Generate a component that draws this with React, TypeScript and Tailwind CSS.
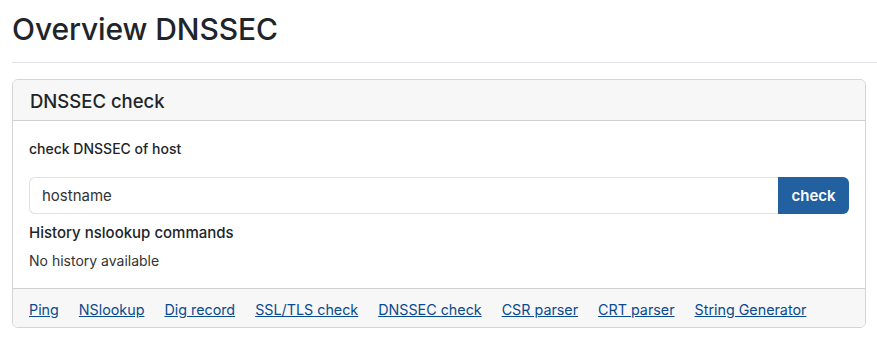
import React from "react";

const links = [
  "Ping",
  "NSlookup",
  "Dig record",
  "SSL/TLS check",
  "DNSSEC check",
  "CSR parser",
  "CRT parser",
  "String Generator",
];

const App = () => {
  return (
    <div className="min-h-[338px] bg-white pl-3 pr-[11px] text-[#212529] font-['Inter',sans-serif]">
      <h1 className="pt-[11px] text-[30px] leading-[36px] font-medium tracking-[-0.1px]">
        Overview DNSSEC
      </h1>
      <hr className="mt-[15px] -mr-[11px] border-t border-[#dee2e6]" />

      <div className="mt-4 rounded-md border border-[#d5d5d5] overflow-hidden">
        <div className="h-[41px] bg-[#f7f7f7] border-b border-[#d0d0d0] px-[17px] flex items-center">
          <h2 className="pt-[3px] text-[18.5px] font-medium">DNSSEC check</h2>
        </div>

        <div className="px-4 pt-[18px] pb-[17px]">
          <p className="text-[14px] font-medium leading-5">check DNSSEC of host</p>
          <div className="mt-[18px] flex h-[37px]">
            <input
              className="flex-1 rounded-l-md border border-r-0 border-[#dee2e6] px-3 pt-[2px] text-[15px] text-[#333] outline-none placeholder:text-[#333]"
              placeholder="hostname"
            />
            <button className="w-[71px] rounded-r-md bg-[#22609f] pt-[2px] text-white text-[15px] font-semibold">
              check
            </button>
          </div>
          <h3 className="mt-[9px] text-[15px] font-medium leading-5">History nslookup commands</h3>
          <p className="mt-2 text-[14px] leading-5 text-[#333]">No history available</p>
        </div>

        <div className="h-[39px] bg-[#f7f7f7] border-t border-[#d0d0d0] px-4 pt-[3px] flex items-center gap-5">
          {links.map((l) => (
            <a key={l} href="#" className="text-[14.3px] text-[#0a4a8f] underline">
              {l}
            </a>
          ))}
        </div>
      </div>
    </div>
  );
};

export default App;
